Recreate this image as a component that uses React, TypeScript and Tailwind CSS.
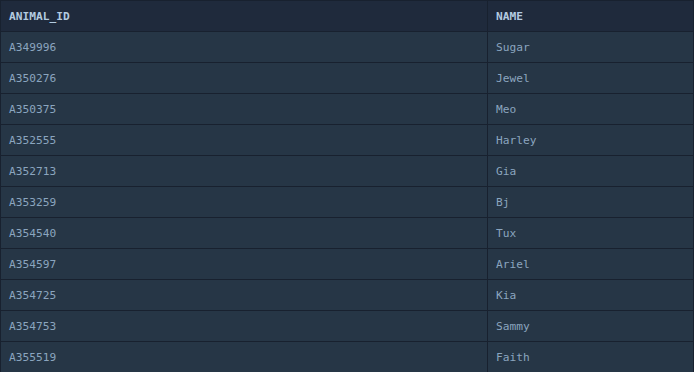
import React from "react";

const ROWS = [
  { id: "A349996", name: "Sugar" },
  { id: "A350276", name: "Jewel" },
  { id: "A350375", name: "Meo" },
  { id: "A352555", name: "Harley" },
  { id: "A352713", name: "Gia" },
  { id: "A353259", name: "Bj" },
  { id: "A354540", name: "Tux" },
  { id: "A354597", name: "Ariel" },
  { id: "A354725", name: "Kia" },
  { id: "A354753", name: "Sammy" },
  { id: "A355519", name: "Faith" },
];

export default function App() {
  return (
    <div className="w-[694px] h-[372px] overflow-hidden bg-[#263646] font-['DejaVu_Sans_Mono',monospace] text-[11.2px]">
      <table className="w-full border-collapse table-fixed">
        <colgroup>
          <col className="w-[487px]" />
          <col />
        </colgroup>
        <thead>
          <tr className="h-[31px] bg-[#1f2a3c]">
            <th className="border border-[#18212f] pl-2 pt-[2px] text-left font-bold text-[#b3cbe0]">ANIMAL_ID</th>
            <th className="border border-[#18212f] pl-2 pt-[2px] text-left font-bold text-[#b3cbe0]">NAME</th>
          </tr>
        </thead>
        <tbody>
          {ROWS.map((r) => (
            <tr key={r.id} className="h-[31px]">
              <td className="border border-[#18212f] pl-2 pt-[2px] text-[#8ba5bf]">{r.id}</td>
              <td className="border border-[#18212f] pl-2 pt-[2px] text-[#8ba5bf]">{r.name}</td>
            </tr>
          ))}
        </tbody>
      </table>
    </div>
  );
}
